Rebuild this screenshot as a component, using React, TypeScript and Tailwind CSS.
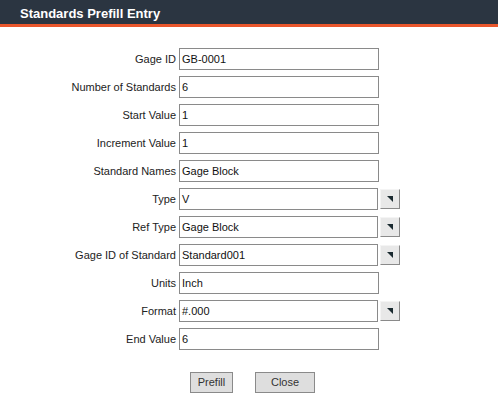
import React from "react";

const rows: { label: string; value: string; select?: boolean }[] = [
  { label: "Gage ID", value: "GB-0001" },
  { label: "Number of Standards", value: "6" },
  { label: "Start Value", value: "1" },
  { label: "Increment Value", value: "1" },
  { label: "Standard Names", value: "Gage Block" },
  { label: "Type", value: "V", select: true },
  { label: "Ref Type", value: "Gage Block", select: true },
  { label: "Gage ID of Standard", value: "Standard001", select: true },
  { label: "Units", value: "Inch" },
  { label: "Format", value: "#.000", select: true },
  { label: "End Value", value: "6" },
];

export default function App() {
  return (
    <div className="w-[498px] h-[405px] bg-white overflow-hidden" style={{ fontFamily: '"Liberation Sans", Arial, sans-serif' }}>
      <div className="h-[24px] bg-[#2b3541] flex items-center pl-[20px]">
        <span className="text-white font-bold text-[13px] leading-none mt-[2px]">Standards Prefill Entry</span>
      </div>
      <div className="h-[3px] bg-[#e9562c]" />
      <div className="flex flex-col pt-[21px] gap-[6px]">
        {rows.map((r) => (
          <div key={r.label} className="flex items-center h-[22px]">
            <div className="w-[179px] text-right text-[11px] text-[#222] pr-[3px]">{r.label}</div>
            {r.select ? (
              <div className="flex items-center">
                <div className="w-[199px] h-[22px] border border-[#8a8a8a] flex items-center px-[2px] text-[11px] text-[#111]">{r.value}</div>
                <div className="ml-[2px] w-[20px] h-[20px] border border-t-[#f4f4f4] border-l-[#f4f4f4] border-b-[#8a8a8a] border-r-[#8a8a8a] bg-[#e8e8e8] flex items-center justify-center">
                  <svg width="8" height="8" viewBox="0 0 8 8">
                    <polygon points="1,1 7,1 7,7" fill="#1a2a30" />
                  </svg>
                </div>
              </div>
            ) : (
              <div className="w-[200px] h-[22px] border border-[#8a8a8a] flex items-center px-[2px] text-[11px] text-[#111]">{r.value}</div>
            )}
          </div>
        ))}
      </div>
      <div className="flex pt-[22px] pl-[190px] gap-[22px]">
        <button className="w-[43px] h-[21px] bg-[#dedede] border border-[#8a8a8a] text-[11px] text-[#333]">Prefill</button>
        <button className="w-[60px] h-[21px] bg-[#dedede] border border-[#8a8a8a] text-[11px] text-[#333]">Close</button>
      </div>
    </div>
  );
}
